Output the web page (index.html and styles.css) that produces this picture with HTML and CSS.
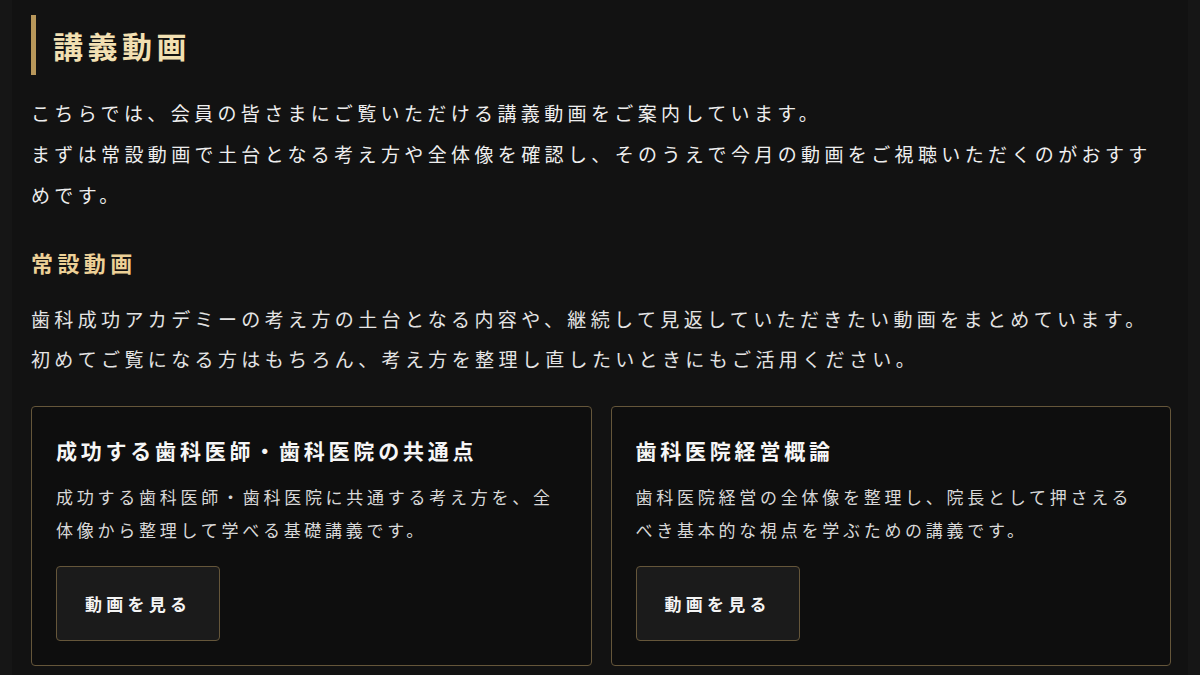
FILE: index.html
```html
<!DOCTYPE html>
<html lang="ja">
<head>
<meta charset="utf-8">
<title>講義動画</title>
<link rel="stylesheet" href="styles.css">
</head>
<body>
<main class="page">
  <h1 class="page-title">講義動画</h1>
  <p class="lead">こちらでは、会員の皆さまにご覧いただける講義動画をご案内しています。<br>まずは常設動画で土台となる考え方や全体像を確認し、そのうえで今月の動画をご視聴いただくのがおすすめです。</p>

  <h2 class="section-title">常設動画</h2>
  <p class="section-text">歯科成功アカデミーの考え方の土台となる内容や、継続して見返していただきたい動画をまとめています。<br>初めてご覧になる方はもちろん、考え方を整理し直したいときにもご活用ください。</p>

  <div class="cards">
    <article class="card">
      <h3 class="card-title">成功する歯科医師・歯科医院の共通点</h3>
      <p class="card-text">成功する歯科医師・歯科医院に共通する考え方を、全体像から整理して学べる基礎講義です。</p>
      <a class="btn" href="#">動画を見る</a>
    </article>
    <article class="card">
      <h3 class="card-title">歯科医院経営概論</h3>
      <p class="card-text">歯科医院経営の全体像を整理し、院長として押さえるべき基本的な視点を学ぶための講義です。</p>
      <a class="btn" href="#">動画を見る</a>
    </article>
  </div>
</main>
</body>
</html>
```

FILE: styles.css
```css
html, body {
  margin: 0;
  padding: 0;
  background: #161616;
  height: 100%;
}

body {
  font-family: "Noto Sans CJK JP", "Noto Sans", sans-serif;
  color: #e9e9e9;
}

.page {
  margin: 0 12px;
  min-height: 100%;
  background: #121212;
  padding: 15px 17px 0 19px;
  box-sizing: border-box;
}

.page-title {
  margin: 0;
  border-left: 5px solid #b8975a;
  padding-left: 17px;
  height: 60px;
  line-height: 60px;
  font-size: 30px;
  font-weight: 700;
  letter-spacing: 0.15em;
  color: #f2e0b2;
}

.lead {
  margin: 17px 0 0;
  font-size: 19px;
  line-height: 41px;
  letter-spacing: 0.23em;
  color: #eeeeee;
}

.section-title {
  margin: 31px 0 0;
  font-size: 22px;
  line-height: 33px;
  font-weight: 700;
  letter-spacing: 0.2em;
  color: #ecd097;
}

.section-text {
  margin: 20px 0 0;
  font-size: 19px;
  line-height: 40px;
  letter-spacing: 0.23em;
  color: #e4e4e4;
}

.cards {
  margin-top: 27px;
  display: grid;
  grid-template-columns: 1fr 1fr;
  gap: 19px;
}

.card {
  background: #0e0e0e;
  border: 1px solid #65563a;
  border-radius: 4px;
  padding: 27px 24px 24px;
}

.card-title {
  margin: 0;
  font-size: 21px;
  line-height: 32px;
  font-weight: 700;
  letter-spacing: 0.18em;
  color: #f6f6f6;
}

.card-text {
  margin: 14px 0 0;
  font-size: 17px;
  line-height: 33px;
  letter-spacing: 0.22em;
  color: #d8d8d8;
}

.btn {
  display: inline-block;
  margin-top: 20px;
  padding: 25px 28px;
  line-height: 23px;
  font-size: 17px;
  font-weight: 700;
  letter-spacing: 0.25em;
  color: #f4f4f4;
  text-decoration: none;
  background: #1b1b1b;
  border: 1px solid #65563a;
  border-radius: 4px;
}
```
